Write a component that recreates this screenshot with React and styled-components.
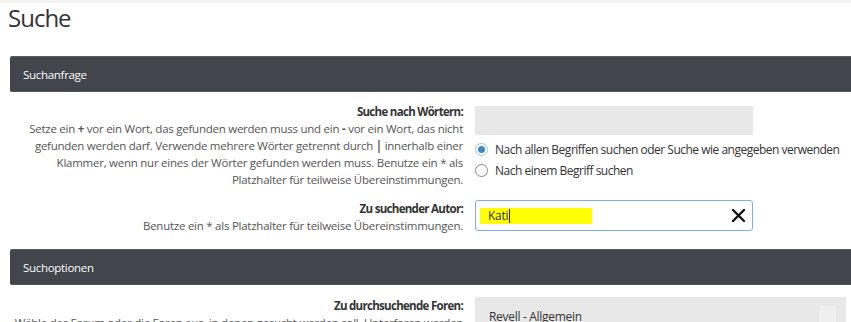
import styled, { createGlobalStyle } from 'styled-components';

const GlobalStyle = createGlobalStyle`
    html, body {
        margin: 0;
        padding: 0;
        background: #fff;
        overflow: hidden;
    }
    body {
        font-family: "Open Sans", "Noto Sans", sans-serif;
        font-size: 11.5px;
        letter-spacing: -0.25px;
        color: #333;
    }
`

const TopStrip = styled.div`
    height: 3px;
    background: #f2f2f2;
`

const Page = styled.div`
    width: 1000px;
    padding-left: 10px;
`

const Title = styled.h1`
    margin: 0 0 24px -2px;
    font-size: 24px;
    font-weight: 400;
    letter-spacing: -1px;
    line-height: 29px;
    color: #333;
`

const PanelHeader = styled.div`
    height: 36px;
    box-sizing: border-box;
    display: flex;
    align-items: center;
    padding-left: 13px;
    background: #42454c;
    border-top: 1px solid #56595f;
    border-bottom: 1px solid #505359;
    border-radius: 2px 0 0 2px;
    color: #fff;
    font-size: 11.5px;
    letter-spacing: -0.3px;
`

const PanelBody = styled.div`
    display: flex;
    flex-direction: column;
    gap: 12px;
    padding: ${p => p.$top}px 0 ${p => p.$bottom}px;
`

const Row = styled.div`
    display: grid;
    grid-template-columns: 453px 1fr;
    column-gap: 12px;
    align-items: start;
`

const Label = styled.div`
    text-align: right;
    line-height: 17px;
`

const LabelTitle = styled.div`
    font-weight: 700;
    color: #333;
    font-size: 11.5px;
    letter-spacing: -0.7px;
`

const Hint = styled.div`
    color: #555;
    white-space: nowrap;
`

const Field = styled.div`
    display: flex;
    flex-direction: column;
    padding-top: ${p => p.$top || 0}px;
`

const GrayInput = styled.div`
    width: 278px;
    height: 29px;
    background: #e8e8e8;
`

const RadioList = styled.div`
    display: flex;
    flex-direction: column;
    padding-top: 4px;
`

const RadioRow = styled.label`
    display: flex;
    align-items: center;
    gap: 7px;
    height: 21px;
    color: #333;
    font-size: 12px;
    letter-spacing: -0.5px;
`

const RadioDot = styled.span`
    width: 13px;
    height: 13px;
    box-sizing: border-box;
    border-radius: 50%;
    border: 1px solid ${p => p.$on ? '#9fc3e2' : '#8a8a8a'};
    background: #fff;
    display: flex;
    align-items: center;
    justify-content: center;

    &::after {
        content: '';
        width: 7px;
        height: 7px;
        border-radius: 50%;
        background: ${p => p.$on ? '#3d89c8' : 'transparent'};
    }
`

const AuthorInput = styled.div`
    width: 278px;
    height: 31px;
    box-sizing: border-box;
    border: 1px solid #7fb0d6;
    border-radius: 3px;
    display: flex;
    align-items: center;
    justify-content: space-between;
    padding: 0 6px 0 4px;
`

const Marked = styled.span`
    display: flex;
    align-items: center;
    width: 104px;
    height: 16px;
    padding-left: 8px;
    background: #ffff00;
    color: #333;
    font-size: 12px;
`

const Caret = styled.span`
    width: 1px;
    height: 14px;
    background: #222;
    margin-left: 1px;
`

const ForumSelect = styled.div`
    width: 371px;
    height: 40px;
    background: #e8e8e8;
    display: flex;
    justify-content: space-between;
    align-items: flex-start;
    padding: 11px 10px 0 14px;
    box-sizing: border-box;
    color: #333;
    font-size: 12px;
    letter-spacing: -0.3px;
`

const ScrollThumb = styled.span`
    width: 17px;
    height: 20px;
    background: #efefef;
    margin-top: -2px;
`

function ClearIcon() {
    return (
        <svg width="15" height="15" viewBox="0 0 15 15">
            <path d="M2 2 L13 13 M13 2 L2 13" stroke="#111" strokeWidth="2.4" strokeLinecap="round" />
        </svg>
    );
}

export default function App() {
    return (
        <>
            <GlobalStyle />
            <TopStrip />
            <Page>
                <Title>Suche</Title>
                <PanelHeader>Suchanfrage</PanelHeader>
                <PanelBody $top={11} $bottom={15}>
                    <Row>
                        <Label>
                            <LabelTitle>Suche nach Wörtern:</LabelTitle>
                            <Hint>Setze ein <b>+</b> vor ein Wort, das gefunden werden muss und ein <b>-</b> vor ein Wort, das nicht</Hint>
                            <Hint>gefunden werden darf. Verwende mehrere Wörter getrennt durch <b>|</b> innerhalb einer</Hint>
                            <Hint>Klammer, wenn nur eines der Wörter gefunden werden muss. Benutze ein * als</Hint>
                            <Hint>Platzhalter für teilweise Übereinstimmungen.</Hint>
                        </Label>
                        <Field $top={3}>
                            <GrayInput />
                            <RadioList>
                                <RadioRow><RadioDot $on />Nach allen Begriffen suchen oder Suche wie angegeben verwenden</RadioRow>
                                <RadioRow><RadioDot />Nach einem Begriff suchen</RadioRow>
                            </RadioList>
                        </Field>
                    </Row>
                    <Row>
                        <Label>
                            <LabelTitle>Zu suchender Autor:</LabelTitle>
                            <Hint>Benutze ein * als Platzhalter für teilweise Übereinstimmungen.</Hint>
                        </Label>
                        <Field>
                            <AuthorInput>
                                <Marked>Kati<Caret /></Marked>
                                <ClearIcon />
                            </AuthorInput>
                        </Field>
                    </Row>
                </PanelBody>
                <PanelHeader>Suchoptionen</PanelHeader>
                <PanelBody $top={12} $bottom={0}>
                    <Row>
                        <Label>
                            <LabelTitle>Zu durchsuchende Foren:</LabelTitle>
                            <Hint>Wähle das Forum oder die Foren aus, in denen gesucht werden soll. Unterforen werden</Hint>
                        </Label>
                        <Field>
                            <ForumSelect>
                                Revell - Allgemein
                                <ScrollThumb />
                            </ForumSelect>
                        </Field>
                    </Row>
                </PanelBody>
            </Page>
        </>
    );
}
